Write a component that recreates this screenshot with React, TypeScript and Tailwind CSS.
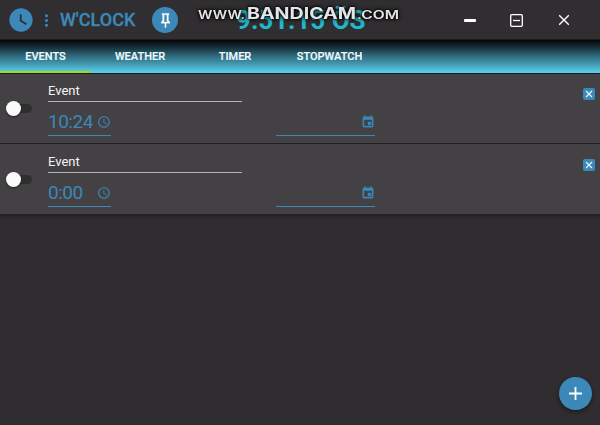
import React from "react";
import { MdAccessTime, MdMoreVert, MdWatchLater } from "react-icons/md";

const tabs = [
  { label: "EVENTS", width: "w-[91px]", active: true },
  { label: "WEATHER", width: "w-[98px]", active: false },
  { label: "TIMER", width: "w-[92px]", active: false },
  { label: "STOPWATCH", width: "w-[97px]", active: false },
];

const events = [
  { name: "Event", time: "10:24" },
  { name: "Event", time: "0:00" },
];

function Watermark() {
  return (
    <svg
      className="absolute left-[194px] top-0 h-8 w-[212px] [filter:drop-shadow(0_0_1px_#000)_drop-shadow(0_0_2px_#000)]"
      viewBox="194 0 212 32"
      fill="#e6e4e5"
      fontFamily="Inter, 'Liberation Sans', sans-serif"
      fontWeight="600"
    >
      <text x="198" y="19" fontSize="11.5" textLength="47" lengthAdjust="spacingAndGlyphs">WWW.</text>
      <text x="247" y="19" fontSize="16" fontWeight="700" textLength="109" lengthAdjust="spacingAndGlyphs">BANDICAM</text>
      <text x="357" y="19" fontSize="11.5" textLength="42" lengthAdjust="spacingAndGlyphs">.COM</text>
    </svg>
  );
}

function TitleBar() {
  return (
    <header className="relative flex h-10 shrink-0 items-center border-b border-[#1c1b1c] bg-[#302e30] text-[#3b88b9]">
      <MdWatchLater className="ml-[7px] mt-px size-7" />
      <MdMoreVert className="ml-[2px] mt-px size-[19px]" />
      <h1 className="ml-[4px] mt-px w-[92px] whitespace-nowrap text-[18px] font-medium leading-none [-webkit-text-stroke:0.300px]">
        W'CLOCK
      </h1>
      <button className="mt-px flex size-[26px] items-center justify-center rounded-full bg-[#3b88b9] text-white">
        <svg viewBox="0 0 24 24" className="size-[17px]" fill="currentColor" stroke="currentColor" strokeWidth="0.500">
          <path d="M16 12V4h1V2H7v2h1v8l-2 2v2h5.200v6h1.600v-6H18v-2l-2-2M8.800 14l1.200-1.200V4h4v8.800L15.200 14z" />
        </svg>
      </button>
      <div className="ml-[58px] whitespace-nowrap text-[26px] font-bold leading-none text-[#20b8cb]">9:51:15 ÖS</div>
      <div className="ml-auto mr-[30px] mt-px flex items-center gap-[35px] text-white">
        <span className="mr-[-1px] h-[3px] w-3 rounded-[1px] bg-white" />
        <svg viewBox="0 0 13 13" className="size-[13px]" fill="none" stroke="currentColor" strokeWidth="1.300">
          <rect x="0.700" y="0.700" width="11.600" height="11.600" rx="1" />
          <path d="M3 6.500h7" />
        </svg>
        <svg viewBox="0 0 12 12" className="size-3" fill="none" stroke="currentColor" strokeWidth="1.400">
          <path d="M1.200 1.200l9.600 9.600M10.800 1.200l-9.600 9.600" />
        </svg>
      </div>
      <Watermark />
    </header>
  );
}

function CalendarIcon() {
  return (
    <svg viewBox="0 0 24 24" className="size-[14px]" fill="currentColor" stroke="currentColor" strokeWidth="0.700">
      <path d="M17 12h-5v5h5v-5zM16 1v2H8V1H6v2H5c-1.110 0-1.990.9-1.990 2L3 19a2 2 0 0 0 2 2h14c1.100 0 2-.9 2-2V5c0-1.100-.9-2-2-2h-1V1h-2zm3 18H5V8h14v11z" />
    </svg>
  );
}

function EventRow({ name, time }: { name: string; time: string }) {
  return (
    <section className="flex h-[71px] shrink-0 border-b border-[#232123] bg-[#434143]">
      <div className="ml-[6px] mt-7 flex h-[15px] w-[26px] items-center">
        <span className="z-10 size-[15px] shrink-0 rounded-full bg-[#fbfbfb] shadow-[0_1px_2px_#222]" />
        <span className="-ml-1 h-[9px] w-[15px] rounded-r-full bg-[#302f30]" />
      </div>
      <div className="ml-4 flex flex-col">
        <div className="flex h-[29px] w-[194px] items-end border-b border-[#b5b3b4] pb-[3px] text-[13px] leading-[15px] text-[#f4f4f4]">
          {name}
        </div>
        <div className="flex h-[34px] text-[#3b88b9]">
          <div className="flex w-[63px] items-center justify-between border-b border-[#3b88b9] pt-[7px]">
            <span className="-mt-[2px] text-[19px] leading-none tracking-[-0.5px]">{time}</span>
            <MdAccessTime className="size-[14px]" />
          </div>
          <div className="ml-[165px] flex w-[99px] shrink-0 items-center justify-end border-b border-[#3b88b9] pt-[7px]">
            <CalendarIcon />
          </div>
        </div>
      </div>
      <button className="ml-auto mr-[5px] mt-[15px] flex size-3 items-center justify-center rounded-[2px] bg-[#3b88b9]">
        <svg viewBox="0 0 8 8" className="size-2" fill="none" stroke="#e8f6ff" strokeWidth="1.200">
          <path d="M1 1l6 6M7 1L1 7" />
        </svg>
      </button>
    </section>
  );
}

export default function App() {
  return (
    <main className="relative flex h-[425px] w-[600px] flex-col overflow-hidden bg-[#2f2d2f] font-[Roboto,'Liberation_Sans',sans-serif]">
      <TitleBar />
      <nav className="relative z-10 flex h-[33px] shrink-0 bg-linear-to-b from-[#040608] via-[#2b6374] via-45% to-[#5bd2f3] shadow-[0_1px_0_#181c20]">
        {tabs.map((tab) => (
          <div
            key={tab.label}
            className={`${tab.width} flex items-center justify-center border-b-2 pt-px text-[11px] font-medium leading-none text-[#eefaff] [-webkit-text-stroke:0.2px] ${
              tab.active ? "border-[#a4d61c]" : "border-transparent"
            }`}
          >
            {tab.label}
          </div>
        ))}
      </nav>
      <div className="flex flex-col shadow-[0_1px_3px_#1b1b1b]">
        {events.map((event) => (
          <EventRow key={event.time} name={event.name} time={event.time} />
        ))}
      </div>
      <button className="absolute bottom-[15px] right-2 flex size-[33px] items-center justify-center rounded-full bg-[#3b88b9] shadow-[0_2px_4px_#1b1b1b]">
        <svg viewBox="0 0 13 13" className="size-[13px]" stroke="#fff" strokeWidth="1.800">
          <path d="M6.500 0v13M0 6.500h13" />
        </svg>
      </button>
    </main>
  );
}
